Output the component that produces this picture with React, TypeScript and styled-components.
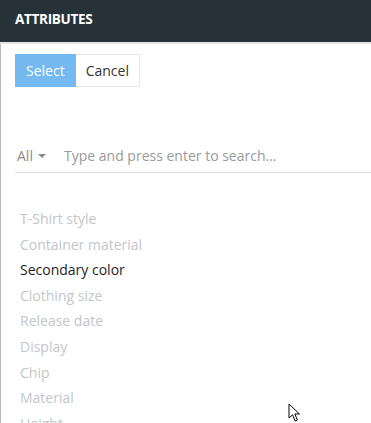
import React from 'react';
import styled, { createGlobalStyle } from 'styled-components';

const GlobalStyle = createGlobalStyle`
  html, body {
    margin: 0;
    padding: 0;
    background: #ffffff;
    font-family: 'Open Sans', 'Noto Sans', sans-serif;
  }
`;

const attributes = [
  'T-Shirt style',
  'Container material',
  'Secondary color',
  'Clothing size',
  'Release date',
  'Display',
  'Chip',
  'Material',
  'Height',
];

const App = (): JSX.Element => {
  return (
    <>
      <GlobalStyle />
      <Panel>
        <Header>
          <Title>ATTRIBUTES</Title>
        </Header>
        <Body>
          <ButtonGroup>
            <PrimaryButton>Select</PrimaryButton>
            <SecondaryButton>Cancel</SecondaryButton>
          </ButtonGroup>
          <SearchRow>
            <FilterToggle>
              All
              <Caret />
            </FilterToggle>
            <SearchInput placeholder="Type and press enter to search..." />
          </SearchRow>
          <List>
            {attributes.map((name) => (
              <Item key={name} active={name === 'Secondary color'}>
                {name}
              </Item>
            ))}
          </List>
        </Body>
        <Cursor width="14" height="20" viewBox="0 0 14 20">
          <path
            d="M1 1 L1 15 L4.5 11.8 L7.2 18 L9.4 17 L6.8 11 L11.5 11 Z"
            fill="#ffffff"
            stroke="#000000"
            strokeWidth="1"
            strokeLinejoin="round"
          />
        </Cursor>
      </Panel>
    </>
  );
};

export default App;

const Panel = styled.div`
  position: relative;
  width: 371px;
  height: 423px;
  overflow: hidden;
  background: #ffffff;
`;
const Header = styled.div`
  height: 42px;
  background: #263238;
  display: flex;
  align-items: center;
  padding: 0 15px;
  border-bottom: 2px solid #e3e3e3;
`;
const Title = styled.div`
  color: #ffffff;
  font-size: 13.5px;
  font-weight: 700;
  letter-spacing: -0.3px;
  margin-top: -5px;
`;
const Body = styled.div`
  border-left: 1px solid #b8b8b8;
  padding: 10px 0 0 14px;
  height: 100%;
`;
const ButtonGroup = styled.div`
  display: flex;
`;
const PrimaryButton = styled.button`
  height: 33px;
  padding: 0 11px;
  border: none;
  background: #74b9f0;
  color: #ffffff;
  font-family: inherit;
  font-size: 14px;
`;
const SecondaryButton = styled.button`
  height: 33px;
  padding: 0 10px;
  border: 1px solid #e6e6e6;
  border-left: none;
  background: #ffffff;
  color: #333333;
  font-family: inherit;
  font-size: 14px;
`;
const SearchRow = styled.div`
  margin-top: 51px;
  display: flex;
  align-items: center;
  height: 34px;
  border-bottom: 1px solid #dcdcdc;
`;
const FilterToggle = styled.div`
  display: flex;
  align-items: center;
  gap: 5px;
  color: #8a8a8a;
  font-size: 14px;
  padding-left: 2px;
  width: 47px;
`;
const Caret = styled.span`
  width: 0;
  height: 0;
  border-left: 4px solid transparent;
  border-right: 4px solid transparent;
  border-top: 4px solid #8a8a8a;
  margin-top: 1px;
`;
const SearchInput = styled.input`
  flex: 1;
  border: none;
  outline: none;
  padding: 0;
  font-family: inherit;
  font-size: 14px;
  color: #333333;
  background: transparent;

  &::placeholder {
    color: #9a9a9a;
  }
`;
const List = styled.div`
  margin-top: 33px;
  padding-left: 5px;
  display: flex;
  flex-direction: column;
`;
const Item = styled.div<{ active?: boolean }>`
  font-size: 14px;
  line-height: 25.6px;
  color: ${({ active }) => (active ? '#1e1e1e' : '#c3c6ca')};
  white-space: nowrap;
`;
const Cursor = styled.svg`
  position: absolute;
  left: 288px;
  top: 403px;
`;
